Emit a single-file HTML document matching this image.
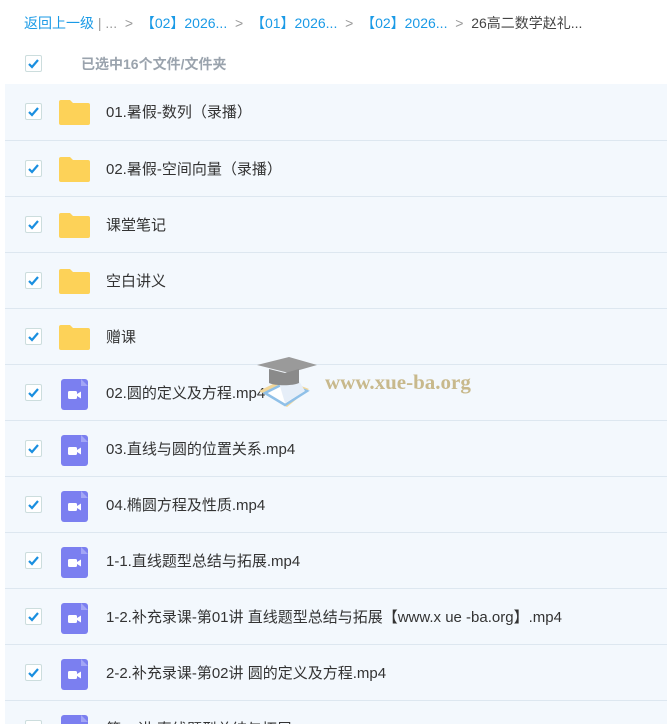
<!DOCTYPE html><html><head><meta charset="utf-8"><style>
html,body{margin:0;width:667px;height:724px;overflow:hidden}
body{background:#fff;font-family:"Liberation Sans","Noto Sans CJK SC",sans-serif;position:relative}
.bc{position:absolute;left:24px;top:13px;font-size:14px;color:#999;white-space:nowrap}
.bc a{color:#1a9ae6}
.cb{position:absolute;width:15px;height:15px;border:1px solid #cdd;border-radius:2px;background:#fff}
.cb svg{position:absolute;left:1px;top:1px}
.list{position:absolute;left:5px;top:84px;right:0;height:640px;overflow:hidden;background:#f3f8fd}
.row{position:absolute;left:0;right:0;height:56px;border-top:1px solid #dde7f0}
.row .t{position:absolute;left:101px;top:17px;font-size:15px;color:#333;white-space:nowrap}
.row .cb{left:20px;top:19px}
.fold{position:absolute;left:53px;top:15px;width:33px;height:26px}
.vid{position:absolute;left:56px;top:14px;width:27px;height:31px;background:#7b7ff0;border-radius:3px}
</style></head><body>
<div class="bc"><a>返回上一级</a> | ... &nbsp;&gt;&nbsp; <a>【02】2026...</a> &nbsp;&gt;&nbsp; <a>【01】2026...</a> &nbsp;&gt;&nbsp; <a>【02】2026...</a> &nbsp;&gt;&nbsp; <span style="color:#444">26高二数学赵礼...</span></div>
<div class="cb" style="left:25px;top:55px"><svg width="13" height="13" viewBox="0 0 13 13"><path d="M2 7l3 3 6-7" stroke="#1a8fe0" stroke-width="2.2" fill="none"/></svg></div>
<div style="position:absolute;left:81px;top:54px;font-size:14px;font-weight:bold;color:#9aa3ad">已选中16个文件/文件夹</div>
<div class="list">
<script>
const rows=[["f","01.暑假-数列（录播）"],["f","02.暑假-空间向量（录播）"],["f","课堂笔记"],["f","空白讲义"],["f","赠课"],["v","02.圆的定义及方程.mp4"],["v","03.直线与圆的位置关系.mp4"],["v","04.椭圆方程及性质.mp4"],["v","1-1.直线题型总结与拓展.mp4"],["v","1-2.补充录课-第01讲 直线题型总结与拓展【www.x ue -ba.org】.mp4"],["v","2-2.补充录课-第02讲 圆的定义及方程.mp4"],["v","第01讲 直线题型总结与拓展.mp4"]];
let h="";rows.forEach((r,i)=>{h+=`<div class="row" style="top:${i*56-(i==0?1:0)}px;${i==0?'border-top-color:#e3ecf5':''}"><div class="cb"><svg width="13" height="13" viewBox="0 0 13 13"><path d="M2 7l3 3 6-7" stroke="#1a8fe0" stroke-width="2.2" fill="none"/></svg></div>`+(r[0]=="f"?`<svg class="fold" viewBox="0 0 33 26"><path d="M1 3a2 2 0 0 1 2-2h9l3 3h15a2 2 0 0 1 2 2v18a2 2 0 0 1-2 2H3a2 2 0 0 1-2-2z" fill="#fdd258"/></svg>`:`<div class="vid"><svg width="27" height="31" viewBox="0 0 27 31"><path d="M20 0l7 7h-7z" fill="#a3a6f6"/><rect x="7" y="12" width="9" height="8" rx="1.5" fill="#fff"/><path d="M16 15l4-2.5v7l-4-2.5z" fill="#fff"/></svg></div>`)+`<div class="t">${r[1]}</div></div>`});document.write(h);
</script>
</div>
<div style="position:absolute;left:257px;top:355px;width:62px;height:60px">
<svg width="62" height="60" viewBox="0 0 62 60"><path d="M2 36l24-12 26 10-22 18z" fill="#f2d79a"/><path d="M8 38l20-10 22 8-22 14z" fill="#fff" stroke="#8fc0e8" stroke-width="2.5"/><path d="M22 28l6 20 20-12-6-10z" fill="#e6eef8"/><path d="M0 10l32-8 28 8-28 8z" fill="#9a9a9a"/><path d="M12 14v14c6 3 24 3 30 0V14l-14 4z" fill="#8a8a8a"/></svg></div>
<div style="position:absolute;left:325px;top:370px;font-family:'Liberation Serif',serif;font-weight:bold;font-size:21px;color:#c8b98c">www.xue-ba.org</div>
</body></html>
